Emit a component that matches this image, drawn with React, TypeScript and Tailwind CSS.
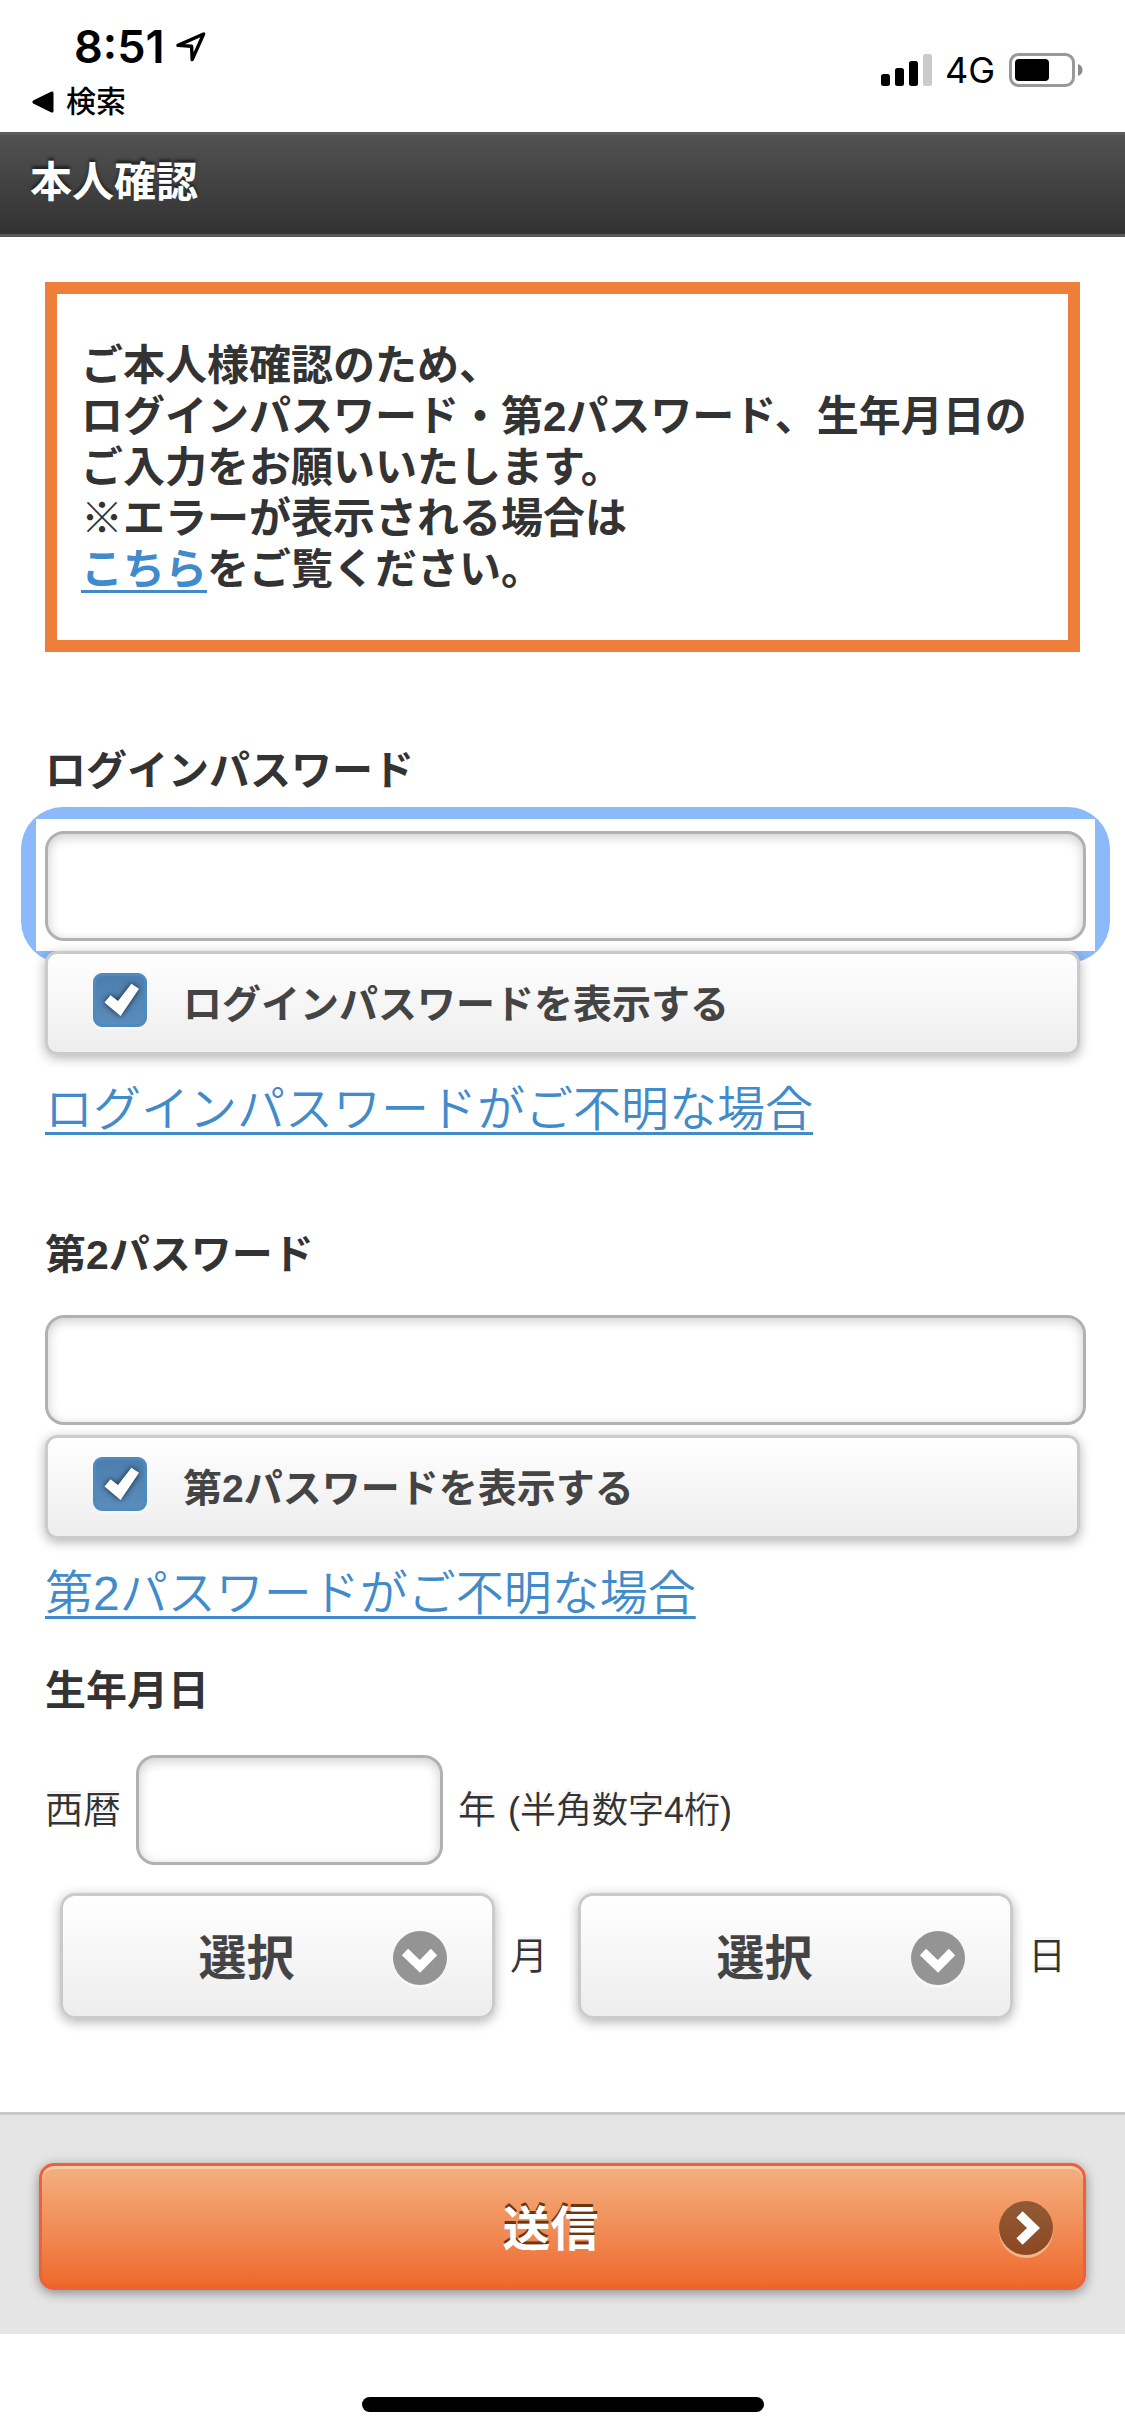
import { useState } from 'react'
import { cva } from 'class-variance-authority'
import clsx from 'clsx'

const MONTHS = Array.from({ length: 12 }, (_, i) => i + 1)
const DAYS = Array.from({ length: 31 }, (_, i) => i + 1)

const field = cva(
  'block h-[110px] rounded-[19px] border-[3px] border-[#b1b1b1] bg-white px-4 text-[42px] text-[#333] outline-none shadow-[inset_0_3px_12px_rgba(0,0,0,0.2)]',
  {
    variants: {
      width: { full: 'w-full', year: 'w-[307px]' },
    },
  }
)

const raised =
  'border-[3px] border-[#cbcbcb] bg-linear-to-b from-white to-[#ededed] shadow-[0_3px_12px_rgba(0,0,0,0.3)]'

function StatusBar() {
  return (
    <div className="flex justify-between pt-[19px] pb-[9px] pr-[42px] pl-8 text-black">
      <div>
        <div className="flex items-center gap-3 pl-[42px] font-['Inter','Liberation_Sans',sans-serif] text-[45px] leading-[56px] font-semibold">
          8:51
          <svg width="30" height="30" viewBox="0 0 30 30" fill="none" stroke="currentColor" strokeWidth="3.4" strokeLinejoin="round">
            <path d="M2 13.4 27.6 2 16.2 27.6 15.6 14.3Z" />
          </svg>
        </div>
        <div className="mt-1.5 flex items-center gap-3 text-[30px] leading-[42px] font-medium">
          <svg width="22" height="22" viewBox="0 0 22 22" fill="currentColor">
            <path d="M1.2 9.6 19.4.6Q21.5 0 21.5 2V20Q21.5 22 19.4 21.4L1.2 12.4Q-.4 11 1.2 9.6Z" />
          </svg>
          検索
        </div>
      </div>
      <div className="flex h-[102px] items-center font-['Inter','Liberation_Sans',sans-serif] text-[36px] leading-[42px]">
        <svg width="52" height="32" viewBox="0 0 52 32">
          <rect x="0" y="20" width="9" height="12" rx="2.5" />
          <rect x="14" y="14" width="9" height="18" rx="2.5" />
          <rect x="28" y="7" width="9" height="25" rx="2.5" />
          <rect x="42" y="0" width="9" height="32" rx="2.5" fill="#cbcbcb" />
        </svg>
        <span className="ml-3 mr-3.5">4G</span>
        <svg width="74" height="34" viewBox="0 0 74 34">
          <rect x="1.5" y="1.5" width="63" height="31" rx="8" fill="none" stroke="#999" strokeWidth="3" />
          <rect x="6" y="6" width="34" height="22" rx="4" />
          <path d="M69 11q4.500 1.500 4.500 6t-4.500 6z" fill="#8a8a8a" />
        </svg>
      </div>
    </div>
  )
}

function ShowToggle({ id, label, className }: { id: string; label: string; className?: string }) {
  const [checked, setChecked] = useState(true)

  return (
    <label htmlFor={id} className={clsx(raised, 'relative flex h-[104px] items-center gap-9 rounded-[12px] pb-1.5 pl-[45px]', className)}>
      <span className="relative size-[54px]">
        <input
          id={id}
          type="checkbox"
          checked={checked}
          onChange={() => setChecked(!checked)}
          className="block size-[54px] appearance-none rounded-[9px] border-[3px] border-[#4f8abf] bg-linear-to-b from-[#4c7fae] to-[#5a8dbc] shadow-[0_3px_0_#f6f6f6]"
        />
        {checked && (
          <svg className="pointer-events-none absolute inset-0 drop-shadow-[0_0_3px_rgba(0,0,0,0.75)]" width="54" height="54" viewBox="0 0 54 54">
            <path d="M11.500 29.500 17.500 22.300 25 28 38.400 10.700 46 15.800 27.600 43Z" fill="#fff" />
          </svg>
        )}
      </span>
      <span className="pt-2 text-[39px] leading-[51px] font-bold text-[#444] [text-shadow:0_3px_0_#f3f3f3]">{label}</span>
    </label>
  )
}

function DateSelect({ label, options }: { label: string; options: number[] }) {
  return (
    <div className="relative flex-1">
      <select
        aria-label={label}
        className={clsx(raised, 'block h-[126px] w-full appearance-none rounded-[15px] pt-1.5 pr-[62px] text-center text-[48px] font-bold text-[#444] [text-align-last:center]')}
      >
        <option>選択</option>
        {options.map((n) => (
          <option key={n}>{n}</option>
        ))}
      </select>
      <svg className="pointer-events-none absolute top-[38px] right-12" width="54" height="57" viewBox="0 0 54 57">
        <circle cx="27" cy="30" r="27" fill="#f8f8f8" />
        <circle cx="27" cy="27" r="27" fill="#949494" />
        <path d="M12 21 27 35.500 41 21" fill="none" stroke="#fff" strokeWidth="9" />
      </svg>
    </div>
  )
}

const labelText = 'block text-[41px] leading-[51px] font-bold'
const helpLink = 'text-[#428bca] underline decoration-[3px] underline-offset-[6px] [text-decoration-skip-ink:none]'
const unitText = 'text-[38px] leading-[51px] [text-shadow:0_-3px_0_#f3f3f3]'

export default function App() {
  return (
    <div className="bg-white font-['Liberation_Sans','Noto_Sans_CJK_JP',sans-serif] text-[#333]">
      <StatusBar />

      <header className="border-b-[3px] border-[#5a5858] bg-linear-to-b from-[#535353] to-[#323232] pl-7.5 shadow-[inset_0_3px_0_#5c5c5c]">
        <h1 className="text-[42px] leading-[102px] font-bold text-white [text-shadow:0_-3px_3px_#222]">本人確認</h1>
      </header>

      <form onSubmit={(e) => e.preventDefault()}>
        <main className="px-[45px] pt-[45px] pb-[93px]">
          <p className="border-[12px] border-[#ee7f3b] pt-[46px] pb-[45px] pl-6 text-[42px] leading-[51px] font-bold">
            ご本人様確認のため、
            <br />
            ログインパスワード・第2パスワード、生年月日の
            <br />
            ご入力をお願いいたします。
            <br />
            ※エラーが表示される場合は
            <br />
            <a href="#help" className={helpLink}>こちら</a>をご覧ください。
          </p>

          <label htmlFor="login-password" className={clsx(labelText, 'mt-[94px]')}>
            ログインパスワード
          </label>
          {/* focus halo: rounded outside, square inside */}
          <div className="mt-2.5 -mr-[30px] -ml-6 rounded-[42px] bg-[#8cb9fa] px-[15px] py-3">
            <div className="bg-white px-[9px] pt-3 pb-2.5">
              <input id="login-password" type="text" className={field({ width: 'full' })} />
            </div>
          </div>
          <ShowToggle id="show-login" label="ログインパスワードを表示する" className="-mt-3" />
          <div className="mt-[25px] text-[48px] leading-[60px] font-[350]">
            <a href="#forgot-login" className={helpLink}>ログインパスワードがご不明な場合</a>
          </div>

          <label htmlFor="second-password" className={clsx(labelText, 'mt-[90px]')}>
            第2パスワード
          </label>
          <div className="mt-[34px] -mr-1.5">
            <input id="second-password" type="text" className={field({ width: 'full' })} />
          </div>
          <ShowToggle id="show-second" label="第2パスワードを表示する" className="mt-2.5" />
          <div className="mt-[25px] text-[48px] leading-[60px] font-[350]">
            <a href="#forgot-second" className={helpLink}>第2パスワードがご不明な場合</a>
          </div>

          <h2 className={clsx(labelText, 'mt-[42px]')}>生年月日</h2>
          <div className="mt-[38px] flex items-center font-[350]">
            <label htmlFor="birth-year" className={unitText}>西暦</label>
            <div className="mx-[15px]">
              <input id="birth-year" type="text" inputMode="numeric" maxLength={4} className={field({ width: 'year' })} />
            </div>
            <span className={unitText}>年</span>
            <span className="ml-3 text-[36px] leading-[51px] [text-shadow:0_-3px_0_#f3f3f3]">(半角数字4桁)</span>
          </div>
          <div className="mt-7 flex items-center pr-3.5 pl-[15px] font-[350]">
            <DateSelect label="月" options={MONTHS} />
            <span className={clsx(unitText, 'mr-[30px] ml-[15px]')}>月</span>
            <DateSelect label="日" options={DAYS} />
            <span className={clsx(unitText, 'ml-[15px]')}>日</span>
          </div>
        </main>

        <footer className="border-t-[3px] border-[#c9c9c9] bg-[#e5e5e5] px-[39px] pt-12 pb-11">
          <button
            type="submit"
            className="relative block h-[127px] w-full rounded-[15px] border-[3px] border-[#ee5f3b] bg-linear-to-b from-[#f3b07f] to-[#ed6828] pt-1.5 pr-6 text-[48px] font-bold text-white shadow-[inset_0_3px_0_rgba(255,255,255,0.35),0_3px_12px_rgba(0,0,0,0.4)] [text-shadow:0_-3px_0_#6a3613]"
          >
            送信
            <svg className="absolute top-[35px] right-[30px]" width="54" height="57" viewBox="0 0 54 57">
              <circle cx="27" cy="30" r="27" fill="#f6b48c" />
              <circle cx="27" cy="27" r="27" fill="url(#submit-disc)" />
              <path d="M20.500 13.500 34.500 27 20.500 40.500" fill="none" stroke="#fff" strokeWidth="9" />
              <defs>
                <linearGradient id="submit-disc" x1="0" y1="0" x2="0" y2="1">
                  <stop stopColor="#915b38" />
                  <stop offset="1" stopColor="#8c4820" />
                </linearGradient>
              </defs>
            </svg>
          </button>
        </footer>
      </form>

      <div className="flex justify-center pt-[63px] pb-6">
        <div className="h-[15px] w-[402px] rounded-full bg-black" />
      </div>
    </div>
  )
}
